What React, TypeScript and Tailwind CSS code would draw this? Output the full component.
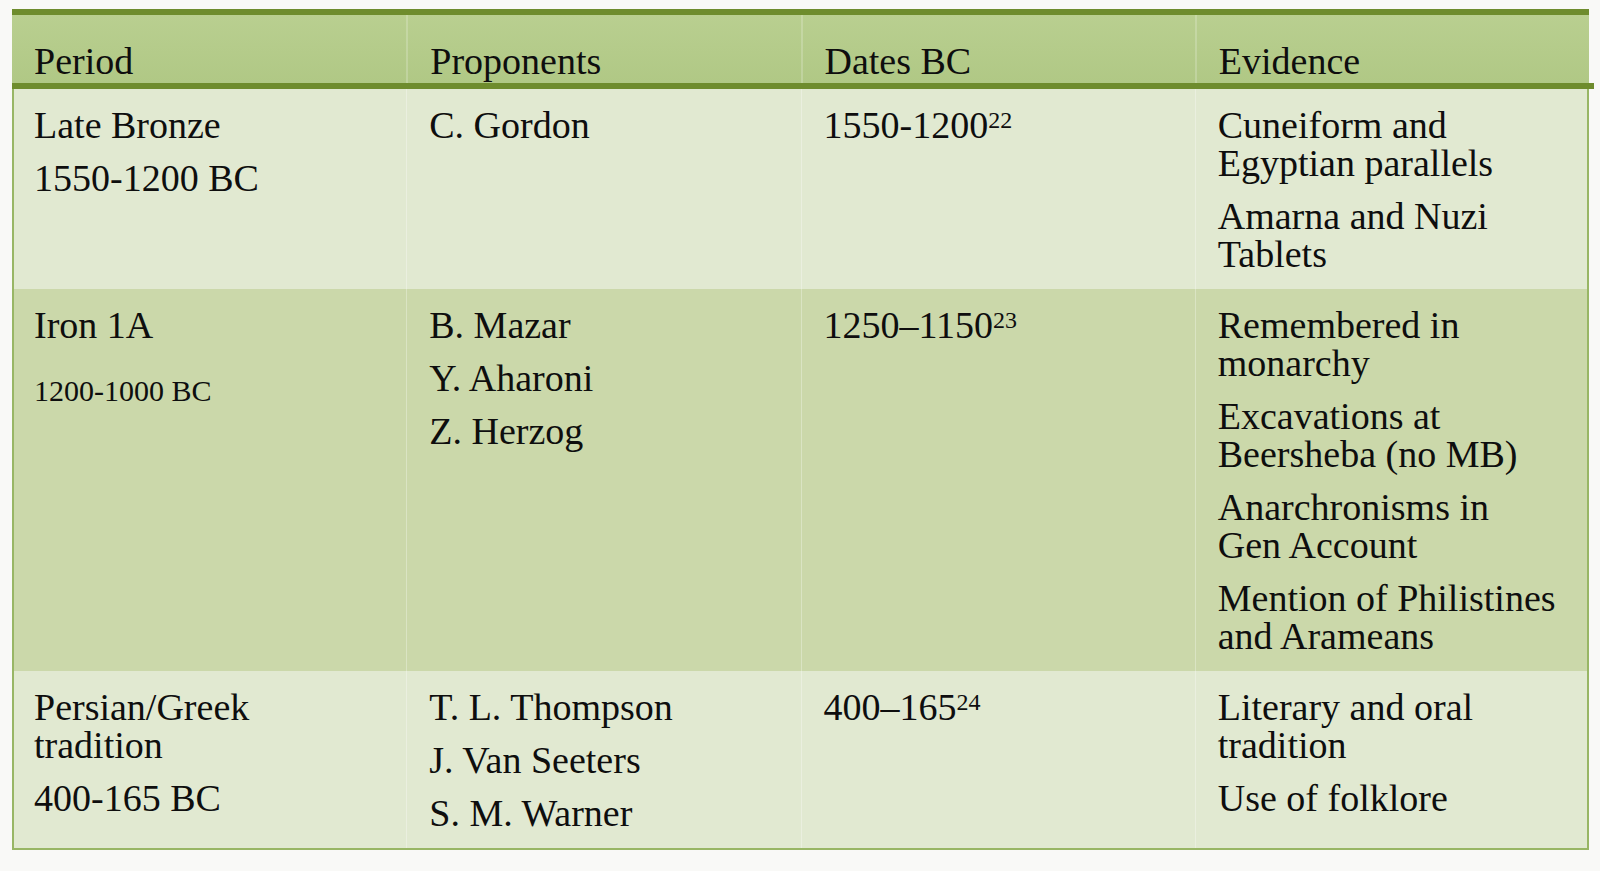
import React from 'react';

// each paragraph is a list of lines, broken as in the slide
type Para = { lines: string[]; sup?: string; small?: boolean };

type Row = {
  bg: string;
  cells: Para[][];
};

const headers = ['Period', 'Proponents', 'Dates BC', 'Evidence'];

const rows: Row[] = [
  {
    bg: 'bg-[#e1e9d1]',
    cells: [
      [{ lines: ['Late Bronze'] }, { lines: ['1550-1200 BC'] }],
      [{ lines: ['C. Gordon'] }],
      [{ lines: ['1550-1200'], sup: '22' }],
      [{ lines: ['Cuneiform and', 'Egyptian parallels'] }, { lines: ['Amarna and Nuzi', 'Tablets'] }],
    ],
  },
  {
    bg: 'bg-[#cbd8aa]',
    cells: [
      [{ lines: ['Iron 1A'] }, { lines: ['1200-1000 BC'], small: true }],
      [{ lines: ['B. Mazar'] }, { lines: ['Y. Aharoni'] }, { lines: ['Z. Herzog'] }],
      [{ lines: ['1250\u20131150'], sup: '23' }],
      [
        { lines: ['Remembered in', 'monarchy'] },
        { lines: ['Excavations at', 'Beersheba (no MB)'] },
        { lines: ['Anarchronisms in', 'Gen Account'] },
        { lines: ['Mention of Philistines', 'and Arameans'] },
      ],
    ],
  },
  {
    bg: 'bg-[#e1e9d1]',
    cells: [
      [{ lines: ['Persian/Greek', 'tradition'] }, { lines: ['400-165 BC'] }],
      [{ lines: ['T. L. Thompson'] }, { lines: ['J. Van Seeters'] }, { lines: ['S. M. Warner'] }],
      [{ lines: ['400\u2013165'], sup: '24' }],
      [{ lines: ['Literary and oral', 'tradition'] }, { lines: ['Use of folklore'] }],
    ],
  },
];

function Cell({ paras, first }: { paras: Para[]; first: boolean }) {
  return (
    <div
      className={
        'pl-[22px] pr-2 pt-[17px] pb-[16px] flex flex-col gap-[15px] ' +
        (first ? '' : 'border-l border-white/30')
      }
    >
      {paras.map((p, i) => (
        <p
          key={i}
          className={
            'whitespace-nowrap ' +
            (p.small ? 'text-[30px] leading-[38px] mt-[13px]' : 'text-[38px] leading-[38px]')
          }
        >
          {p.lines.map((l, li) => (
            <span key={li} className="block">
              {l}
              {p.sup && li === p.lines.length - 1 && (
                <span className="text-[24px] leading-none align-[10px]">{p.sup}</span>
              )}
            </span>
          ))}
        </p>
      ))}
    </div>
  );
}

export default function App() {
  return (
    <div
      className="min-h-screen w-full bg-[#f9f9f7] pt-[9px] pl-[12px] text-[#0e0e0e]"
      style={{ fontFamily: '"Liberation Serif", "DejaVu Serif", serif' }}
    >
      <div className="w-[1577px]">
        <div className="h-[6px] bg-[#6e8c2d]" />
        <div className="grid grid-cols-4 h-[68px] bg-gradient-to-b from-[#b9cf90] to-[#b0c885]">
          {headers.map((h, i) => (
            <div
              key={h}
              className={'pl-[22px] pt-[27px] ' + (i === 0 ? '' : 'border-l-2 border-white/20')}
            >
              <p className="text-[38px] leading-[38px]">{h}</p>
            </div>
          ))}
        </div>
        <div className="h-[6px] w-[1582px] bg-[#6e8c2d]" />
        {rows.map((r, ri) => (
          <div
            key={ri}
            className={
              'grid grid-cols-4 shadow-[inset_2px_0_0_#98b665,inset_-2px_0_0_#98b665] ' + r.bg
            }
          >
            {r.cells.map((c, ci) => (
              <Cell key={ci} paras={c} first={ci === 0} />
            ))}
          </div>
        ))}
        <div className="h-[2px] bg-[#98b665]" />
      </div>
    </div>
  );
}
